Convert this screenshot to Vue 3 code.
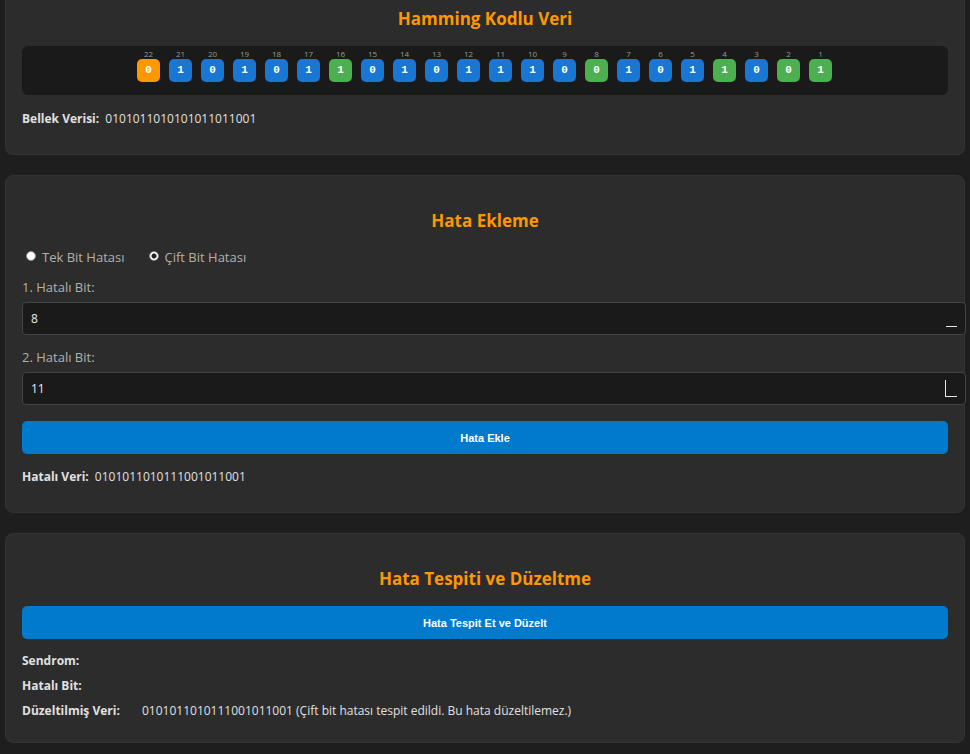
<script setup>
import { ref } from 'vue'

const code = '0101011010101011011001'
const faulty = '0101011010111001011001'
const parityPositions = [1, 2, 4, 8, 16]

// The strip runs from the overall parity bit (22) down to bit 1.
const stripValues = [0, 1, 0, 1, 0, 1, 1, 0, 1, 0, 1, 1, 1, 0, 0, 1, 0, 1, 1, 0, 0, 1]
const bits = stripValues.map((value, index) => {
  const position = stripValues.length - index
  const kind = position === 22 ? 'overall' : parityPositions.includes(position) ? 'parity' : 'data'
  return { value, position, kind }
})
const positions = Array.from({ length: 22 }, (_, i) => i + 1)

const errorType = ref('double')
const firstBit = ref(8)
const secondBit = ref(11)
</script>

<template>
  <main class="page">
    <section class="card card-first">
      <h2>Hamming Kodlu Veri</h2>
      <div class="strip">
        <div v-for="bit in bits" :key="bit.position" class="cell">
          <span class="position">{{ bit.position }}</span>
          <span class="bit" :class="bit.kind">{{ bit.value }}</span>
        </div>
      </div>
      <p class="result"><strong>Bellek Verisi:</strong> {{ code }}</p>
    </section>

    <section class="card">
      <h2>Hata Ekleme</h2>
      <div class="radios">
        <label class="radio"><input v-model="errorType" type="radio" name="error" value="single">Tek Bit Hatası</label>
        <label class="radio"><input v-model="errorType" type="radio" name="error" value="double">Çift Bit Hatası</label>
      </div>
      <label class="field-label" for="first-bit">1. Hatalı Bit:</label>
      <select id="first-bit" v-model="firstBit">
        <option v-for="n in positions" :key="n" :value="n">{{ n }}</option>
      </select>
      <label class="field-label" for="second-bit">2. Hatalı Bit:</label>
      <select id="second-bit" v-model="secondBit" class="cornered">
        <option v-for="n in positions" :key="n" :value="n">{{ n }}</option>
      </select>
      <button type="button" class="inject">Hata Ekle</button>
      <p class="result"><strong>Hatalı Veri:</strong> {{ faulty }}</p>
    </section>

    <section class="card card-last">
      <h2>Hata Tespiti ve Düzeltme</h2>
      <button type="button">Hata Tespit Et ve Düzelt</button>
      <dl class="report">
        <dt>Sendrom:</dt><dd></dd>
        <dt>Hatalı Bit:</dt><dd></dd>
        <dt>Düzeltilmiş Veri:</dt>
        <dd>{{ faulty }} (Çift bit hatası tespit edildi. Bu hata düzeltilemez.)</dd>
      </dl>
    </section>
  </main>
</template>

<style>
body {
  margin: 0;
  background: #1e1e1e;
}
</style>

<style scoped>
.page {
  display: flex;
  flex-direction: column;
  gap: 20px;
  padding: 0 5px 11px;
  color: #e0e0e0;
  font: 12px/18px "Open Sans", "Noto Sans", sans-serif;
}
.card {
  padding: 33px 16px 26px;
  border: 1px solid #333;
  border-radius: 8px;
  background: #2c2c2c;
}
.card-first {
  padding-top: 7px;
  border-top: 0;
  border-radius: 0 0 8px 8px;
}
.card-last {
  padding-bottom: 22px;
}
h2 {
  margin: 0 0 15px;
  color: #ff9800;
  font-size: 17px;
  line-height: 24px;
  text-align: center;
}
.strip {
  display: flex;
  justify-content: center;
  gap: 9px;
  margin-bottom: 15px;
  padding: 4px 1px 13px 0;
  border-radius: 6px;
  background: #1a1a1a;
}
.cell {
  display: flex;
  flex-direction: column;
  align-items: center;
  width: 23px;
}
.position {
  margin-bottom: 1px;
  color: #999;
  font-size: 8px;
  line-height: 8px;
}
.bit {
  width: 23px;
  border-radius: 5px;
  color: #fff;
  font: bold 11px/23px "Liberation Mono", monospace;
  text-align: center;
}
.data { background: #1976d2; }
.parity { background: #4caf50; }
.overall { background: #ff9800; }
.result {
  margin: 0;
}
.result strong {
  margin-right: 3px;
}
.radios {
  display: flex;
  gap: 24px;
  margin-bottom: 11px;
  padding-left: 4px;
}
.radio {
  display: flex;
  align-items: center;
  gap: 6px;
  color: #b0b0b0;
  font-size: 13px;
}
.radio input {
  appearance: none;
  width: 10px;
  height: 10px;
  margin: 0 0 2px;
  border: 1px solid #888;
  border-radius: 50%;
  background: #fff;
}
.radio input:checked {
  background: radial-gradient(circle, #222 2px, #fff 3px);
}
.field-label {
  display: block;
  margin-bottom: 5px;
  color: #b0b0b0;
  font-size: 13px;
  line-height: 20px;
}
select {
  appearance: none;
  box-sizing: content-box;
  display: block;
  width: 100%;
  height: 31px;
  margin: 0 0 12px;
  padding: 0 8px;
  border: 1px solid #444;
  border-radius: 4px;
  background: linear-gradient(#e8e8e8, #e8e8e8) right 8px bottom 7px / 11px 1px no-repeat #1a1a1a;
  color: #e0e0e0;
  font: 12px "Noto Sans", sans-serif;
}
select.cornered {
  background:
    linear-gradient(#e8e8e8, #e8e8e8) right 8px bottom 7px / 12px 1px no-repeat,
    linear-gradient(#e8e8e8, #e8e8e8) right 19px bottom 7px / 1px 17px no-repeat #1a1a1a;
}
button {
  display: block;
  width: 100%;
  height: 33px;
  margin: 0 0 13px;
  border: 0;
  border-radius: 5px;
  background: #007acc;
  color: #fff;
  font: bold 11px "Liberation Sans", Arial, sans-serif;
}
.inject {
  margin: 16px 0 14px;
}
.report {
  display: grid;
  grid-template-columns: 120px 1fr;
  row-gap: 7px;
  margin: 0;
}
dt {
  font-weight: bold;
}
dd {
  margin: 0;
}
</style>
